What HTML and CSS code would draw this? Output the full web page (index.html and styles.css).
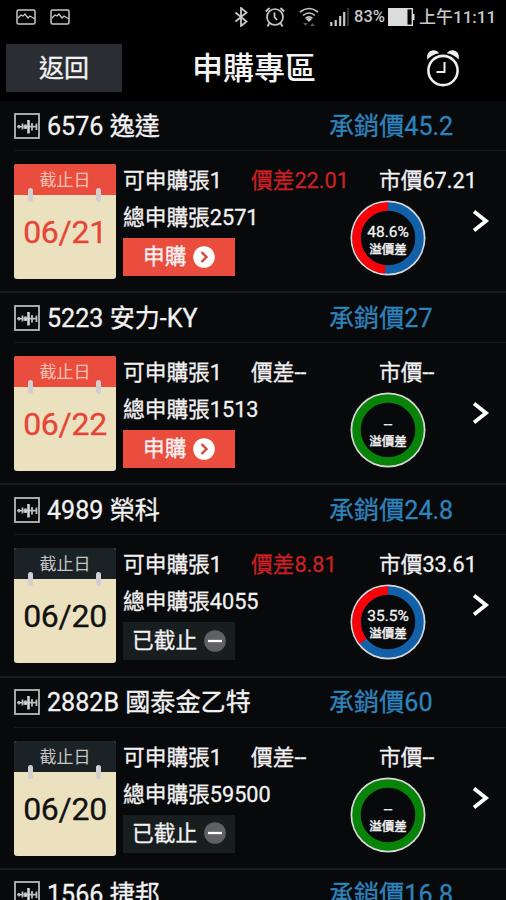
FILE: index.html
```html
<!DOCTYPE html>
<html lang="zh-Hant">
<head>
<meta charset="utf-8">
<title>申購專區</title>
<link rel="stylesheet" href="styles.css">
</head>
<body>
<svg class="defs" width="0" height="0" aria-hidden="true">
  <defs>
    <symbol id="picture" viewBox="0 0 20 16"><rect x="1" y="1" width="18" height="14" rx="1.5" fill="none" stroke="currentColor" stroke-width="1.5"/><path d="M2 9l3-3 2 1 2-2 3 4 2-2 5 3" fill="none" stroke="currentColor" stroke-width="1.3"/></symbol>
    <symbol id="wave" viewBox="0 0 26 26"><rect x="1" y="1" width="24" height="24" fill="#08090b" stroke="#b8b8b8" stroke-width="1.8"/><path d="M5 12v3.500M8.500 10.500v6M18 10v7.500M22.500 10.500v6.500M3 13.700h20" fill="none" stroke="#bdbdbd" stroke-width="1.800"/><path d="M11.500 11.500v4.500M14.500 7v13.500" fill="none" stroke="#d0d0d0" stroke-width="2.600"/></symbol>
    <symbol id="go" viewBox="0 0 22 22"><circle cx="11" cy="11" r="10.800" fill="#fff"/><path d="M8.500 6l5 5-5 5" fill="none" stroke="#d9463c" stroke-width="2.400"/></symbol>
    <symbol id="minus" viewBox="0 0 22 22"><circle cx="11" cy="11" r="10.800" fill="#5f6164"/><path d="M4 11h14" stroke="#fff" stroke-width="2.300"/></symbol>
    <symbol id="next" viewBox="0 0 18 24"><path d="M2 2.500l12 9.500-12 9.500" fill="none" stroke="#fff" stroke-width="3.800"/></symbol>
  </defs>
</svg>
<div class="screen">
  <div class="status">
    <svg class="s-pic" viewBox="0 0 20 16"><use href="#picture"/></svg>
    <svg class="s-pic" viewBox="0 0 20 16"><use href="#picture"/></svg>
    <svg class="s-bt" viewBox="0 0 14 20"><path d="M1.500 5.500l11 9L7 19V1l5.500 4.500-11 9" fill="none" stroke="currentColor" stroke-width="1.800"/></svg>
    <svg class="s-alarm" viewBox="0 0 20 20"><circle cx="10" cy="10" r="8" fill="none" stroke="currentColor" stroke-width="1.700"/><path d="M9.500 5.500V10l2.500 3M.8 4.500L4.500 1M19.200 4.500L15.500 1M4.500 16L2.500 19.500M15.500 16l2 3.500" fill="none" stroke="currentColor" stroke-width="1.800"/></svg>
    <svg class="s-wifi" viewBox="0 0 20 20"><path d="M1 5q9-7 18 0M4 8.500q6-5 12 0M6.500 11.300q3.500-2.800 7 0" fill="none" stroke="currentColor" stroke-width="1.600"/><path d="M7 12q3-2 6 0l-3 3z" fill="currentColor"/><path d="M4 16h5l-2.500 3zM11 19h5l-2.500-3z" fill="#555"/></svg>
    <svg class="s-signal" viewBox="0 0 19 18"><path d="M1.300 14v4M5.700 12v6M10.200 8v10M14.200 4v14" stroke="currentColor" stroke-width="2.200"/><path d="M18 0v18" stroke="#444" stroke-width="1.500"/></svg>
    <span class="s-pct">83%</span>
    <svg class="s-batt" viewBox="0 0 27 18"><rect x=".7" y=".7" width="23.600" height="16.600" fill="none" stroke="currentColor" stroke-width="1.400"/><path d="M1 1h18.500v16H1z" fill="currentColor"/><path d="M25.500 6v6" stroke="currentColor" stroke-width="2"/></svg>
    <span class="s-time">上午11:11</span>
  </div>
  <header class="bar">
    <button class="back">返回</button>
    <h1 class="title">申購專區</h1>
    <svg class="clock" viewBox="0 0 34 38"><circle cx="17" cy="21.500" r="14.600" fill="none" stroke="#eee" stroke-width="2.600"/><path d="M18.500 13v10h-8" fill="none" stroke="#eee" stroke-width="2"/><path d="M1.300 10.500Q0 2 7 1.200 11 1 13.200 4.300 6 5.500 1.300 10.500zM32.700 10.500Q34 2 27 1.200 23 1 20.800 4.300 28 5.500 32.700 10.500z" fill="#eee"/></svg>
  </header>
  <main class="list">
    <section class="item">
      <div class="head"><svg class="wave"><use href="#wave"/></svg><span class="name">6576 逸達</span><span class="price">承銷價45.2</span></div>
      <div class="body">
        <div class="cal"><div class="cal-top">截止日</div><div class="cal-day">06/21</div></div>
        <div class="info">
          <div class="line"><span class="qty">可申購張1</span><span class="diff up">價差22.01</span><span>市價67.21</span></div>
          <div class="line">總申購張2571</div>
          <div class="btn">申購<svg class="btn-icon"><use href="#go"/></svg></div>
        </div>
        <div class="ring">
          <svg class="donut" viewBox="0 0 76 76"><circle cx="38" cy="38" r="37.500" fill="#d8d8d8"/><circle cx="38" cy="38" r="31.500" class="arc blue"/><circle cx="38" cy="38" r="31.500" class="arc red" pathLength="100" stroke-dasharray="48.6 100" transform="matrix(0 -1 -1 0 76 76)"/></svg>
          <div class="ring-text"><span>48.6%</span><small>溢價差</small></div>
        </div>
        <svg class="next"><use href="#next"/></svg>
      </div>
    </section>
    <section class="item">
      <div class="head"><svg class="wave"><use href="#wave"/></svg><span class="name">5223 安力-KY</span><span class="price">承銷價27</span></div>
      <div class="body">
        <div class="cal"><div class="cal-top">截止日</div><div class="cal-day">06/22</div></div>
        <div class="info">
          <div class="line"><span class="qty">可申購張1</span><span class="diff">價差--</span><span>市價--</span></div>
          <div class="line">總申購張1513</div>
          <div class="btn">申購<svg class="btn-icon"><use href="#go"/></svg></div>
        </div>
        <div class="ring">
          <svg class="donut" viewBox="0 0 76 76"><circle cx="38" cy="38" r="37.500" fill="#d8d8d8"/><circle cx="38" cy="38" r="31.500" class="arc green"/></svg>
          <div class="ring-text"><span>--</span><small>溢價差</small></div>
        </div>
        <svg class="next"><use href="#next"/></svg>
      </div>
    </section>
    <section class="item closed">
      <div class="head"><svg class="wave"><use href="#wave"/></svg><span class="name">4989 榮科</span><span class="price">承銷價24.8</span></div>
      <div class="body">
        <div class="cal"><div class="cal-top">截止日</div><div class="cal-day">06/20</div></div>
        <div class="info">
          <div class="line"><span class="qty">可申購張1</span><span class="diff up">價差8.81</span><span>市價33.61</span></div>
          <div class="line">總申購張4055</div>
          <div class="btn">已截止<svg class="btn-icon"><use href="#minus"/></svg></div>
        </div>
        <div class="ring">
          <svg class="donut" viewBox="0 0 76 76"><circle cx="38" cy="38" r="37.500" fill="#d8d8d8"/><circle cx="38" cy="38" r="31.500" class="arc blue"/><circle cx="38" cy="38" r="31.500" class="arc red" pathLength="100" stroke-dasharray="35.5 100" transform="matrix(0 -1 -1 0 76 76)"/></svg>
          <div class="ring-text"><span>35.5%</span><small>溢價差</small></div>
        </div>
        <svg class="next"><use href="#next"/></svg>
      </div>
    </section>
    <section class="item closed">
      <div class="head"><svg class="wave"><use href="#wave"/></svg><span class="name">2882B 國泰金乙特</span><span class="price">承銷價60</span></div>
      <div class="body">
        <div class="cal"><div class="cal-top">截止日</div><div class="cal-day">06/20</div></div>
        <div class="info">
          <div class="line"><span class="qty">可申購張1</span><span class="diff">價差--</span><span>市價--</span></div>
          <div class="line">總申購張59500</div>
          <div class="btn">已截止<svg class="btn-icon"><use href="#minus"/></svg></div>
        </div>
        <div class="ring">
          <svg class="donut" viewBox="0 0 76 76"><circle cx="38" cy="38" r="37.500" fill="#d8d8d8"/><circle cx="38" cy="38" r="31.500" class="arc green"/></svg>
          <div class="ring-text"><span>--</span><small>溢價差</small></div>
        </div>
        <svg class="next"><use href="#next"/></svg>
      </div>
    </section>
    <section class="item">
      <div class="head"><svg class="wave"><use href="#wave"/></svg><span class="name">1566 捷邦</span><span class="price">承銷價16.8</span></div>
    </section>
  </main>
</div>
</body>
</html>
```
FILE: styles.css
```css
* { box-sizing: border-box; }
body { margin: 0; background: #000; color: #f2f2f2; font-family: Roboto, "Noto Sans CJK TC", sans-serif; }
svg { display: block; flex: none; }
.defs { position: absolute; }
.screen { width: 506px; height: 900px; overflow: hidden; display: flex; flex-direction: column; }

.status { flex: none; height: 34px; display: flex; align-items: center; padding-left: 16px; color: #c8c8c8; white-space: nowrap; }
.s-pic { width: 20px; height: 16px; margin-right: 14px; }
.s-bt { width: 14px; height: 20px; margin-left: 150px; }
.s-alarm { width: 20px; height: 20px; margin-left: 17px; }
.s-wifi { width: 20px; height: 20px; margin-left: 14px; }
.s-signal { width: 19px; height: 18px; margin-left: 11px; }
.s-pct { width: 32px; margin-left: 5px; font-size: 16.5px; font-weight: 500; line-height: 34px; }
.s-batt { width: 27px; height: 18px; margin-left: 2px; color: #dcdcdc; }
.s-time { margin-left: 4px; font-size: 17px; font-weight: 500; line-height: 32px; }

.bar { flex: none; height: 67px; display: grid; grid-template-columns: 116px 1fr 96px; align-items: start; padding: 10px 0 0 6px; }
.back { height: 48px; border: 0; padding: 0; background: #2a2d31; color: #f4f4f4; font: 25px/50px Roboto, "Noto Sans CJK TC", sans-serif; }
.title { margin: 0 0 0 70px; font-size: 31px; line-height: 50px; font-weight: 500; color: #f4f4f4; }
.clock { width: 34px; height: 38px; margin: 5px 0 0 16px; }

.list { flex: none; background: #08090b; }
.item { height: 192.2px; border-bottom: 2px solid #1b1d1f; }
.head { height: 50px; margin-left: 14px; display: flex; align-items: center; border-bottom: 1px solid #16181a; font-size: 25.1px; line-height: 48px; }
.wave { width: 26px; height: 26px; margin-right: 7px; }
.name { width: 282px; white-space: nowrap; }
.name, .price { padding-top: 2px; }
.price { color: #2f83bd; }

.body { display: flex; padding: 13px 0 0 14px; position: relative; }
.cal { width: 102px; height: 115px; border-radius: 3px; background: #ebe1bf; overflow: hidden; position: relative; }
.cal::before, .cal::after { content: ""; position: absolute; top: 24px; width: 5px; height: 14px; border-radius: 3px; background: #d2ced2; }
.cal::before { left: 14px; }
.cal::after { left: 82px; }
.cal-top { height: 31px; background: #ea4c3e; color: #f6c4b4; font-size: 17px; line-height: 32px; text-align: center; }
.cal-day { color: #e54538; font-size: 32px; line-height: 75px; text-align: center; letter-spacing: -.3px; -webkit-text-stroke: .3px currentColor; }
.info { margin-left: 7px; font-size: 21.7px; }
.line { display: flex; height: 37px; line-height: 33px; white-space: nowrap; }
.qty, .diff { width: 128px; }
.up { color: #cb2024; }
.btn { width: 112px; height: 38px; background: #ea4c3e; display: flex; align-items: center; padding-left: 20px; line-height: 40px; }
.btn-icon { width: 22px; height: 22px; margin-left: 7px; margin-bottom: 1px; }
.closed .cal-top { background: #1b2225; color: #c6c6c6; }
.closed .cal-day { color: #111; }
.closed .btn { background: #181d20; padding-left: 9px; }

.ring { position: absolute; left: 350px; top: 49px; width: 76px; height: 76px; }
.donut { width: 76px; height: 76px; }
.arc { fill: #08090b; stroke-width: 8.500px; }
.blue { stroke: #1260a8; }
.red { stroke: #fb0006; fill: none; }
.green { stroke: #078307; }
.ring-text { position: absolute; inset: 24px 0 auto; display: flex; flex-direction: column; text-align: center; font-size: 15.5px; line-height: 17px; }
.ring-text small { font-size: 12.5px; font-weight: 500; }
.next { position: absolute; left: 472px; top: 58px; width: 18px; height: 24px; }

.name, .price, .line, .btn, .back, .ring-text { -webkit-text-stroke: .3px currentColor; }
```
